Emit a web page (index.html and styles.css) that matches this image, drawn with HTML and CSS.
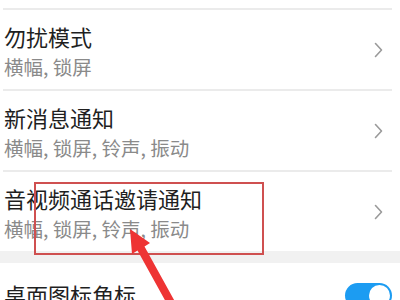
FILE: index.html
```html
<!DOCTYPE html>
<html lang="zh">
<head>
<meta charset="utf-8">
<link rel="stylesheet" href="styles.css">
</head>
<body>
<div class="page">
  <div class="list">
    <div class="row">
      <div class="texts">
        <div class="title">勿扰模式</div>
        <div class="sub">横幅, 锁屏</div>
      </div>
      <span class="chev"><svg width="9" height="16" viewBox="0 0 9 16"><path d="M1.5 1.5 L7.5 8 L1.5 14.5" fill="none" stroke="#9a9a9a" stroke-width="1.6" stroke-linecap="round" stroke-linejoin="round"/></svg></span>
    </div>
    <div class="row">
      <div class="texts">
        <div class="title">新消息通知</div>
        <div class="sub">横幅, 锁屏, 铃声, 振动</div>
      </div>
      <span class="chev"><svg width="9" height="16" viewBox="0 0 9 16"><path d="M1.5 1.5 L7.5 8 L1.5 14.5" fill="none" stroke="#9a9a9a" stroke-width="1.6" stroke-linecap="round" stroke-linejoin="round"/></svg></span>
    </div>
    <div class="row last">
      <div class="texts">
        <div class="title">音视频通话邀请通知</div>
        <div class="sub">横幅, 锁屏, 铃声, 振动</div>
      </div>
      <span class="chev"><svg width="9" height="16" viewBox="0 0 9 16"><path d="M1.5 1.5 L7.5 8 L1.5 14.5" fill="none" stroke="#9a9a9a" stroke-width="1.6" stroke-linecap="round" stroke-linejoin="round"/></svg></span>
    </div>
  </div>
  <div class="band"></div>
  <div class="list">
    <div class="row single">
      <div class="title">桌面图标角标</div>
      <span class="toggle"><span class="knob"></span></span>
    </div>
  </div>
  <div class="mark"></div>
  <svg class="arrow" width="400" height="300" viewBox="0 0 400 300">
    <polygon points="130,229 150,243 144.5,246.5 178.5,308 171.5,312 137.5,250.5 132,254" fill="#ee3434"/>
  </svg>
</div>
</body>
</html>
```
FILE: styles.css
```css
html, body {
  margin: 0;
  padding: 0;
  background: #ffffff;
}
.page {
  position: relative;
  width: 400px;
  height: 300px;
  overflow: hidden;
  font-family: "Noto Sans CJK SC", "Noto Sans", sans-serif;
  padding-top: 8px;
  box-sizing: border-box;
}
.list {
  margin: 0 8px 0 3px;
  border-top: 2px solid #ebebeb;
}
.band + .list {
  border-top: none;
}
.row {
  display: flex;
  align-items: center;
  justify-content: space-between;
  height: 79px;
  border-bottom: 2px solid #ebebeb;
  padding-left: 1px;
}
.row.last {
  border-bottom: none;
}
.row.single {
  height: 60px;
  border-bottom: none;
  align-items: flex-start;
  padding-top: 16px;
  box-sizing: border-box;
}
.texts {
  display: flex;
  flex-direction: column;
  padding-top: 2px;
}
.title {
  font-size: 22px;
  line-height: 30px;
  color: #1f1f1f;
}
.sub {
  font-size: 19.5px;
  line-height: 26px;
  margin-top: 3px;
  color: #8a8a8a;
}
.chev {
  display: flex;
  margin-right: 9px;
}
.band {
  height: 12px;
  background: #f1f1f1;
}
.toggle {
  position: relative;
  display: block;
  width: 47px;
  height: 25px;
  border-radius: 13px;
  background: #1c9cf2;
  margin-top: 4px;
}
.knob {
  position: absolute;
  right: 2px;
  top: 2px;
  width: 21px;
  height: 21px;
  border-radius: 50%;
  background: #ffffff;
}
.mark {
  position: absolute;
  left: 34px;
  top: 182px;
  width: 226px;
  height: 69px;
  border: 2px solid #cf5050;
}
.arrow {
  position: absolute;
  left: 0;
  top: 0;
}
```
